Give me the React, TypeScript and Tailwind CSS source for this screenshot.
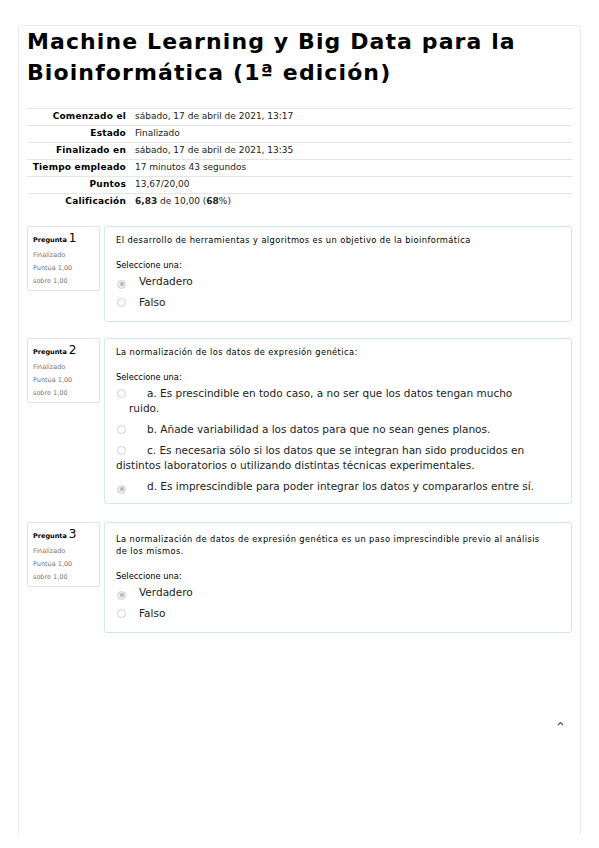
import React from 'react';

const summary: [string, React.ReactNode][] = [
    ['Comenzado el', 'sábado, 17 de abril de 2021, 13:17'],
    ['Estado', 'Finalizado'],
    ['Finalizado en', 'sábado, 17 de abril de 2021, 13:35'],
    ['Tiempo empleado', '17 minutos 43 segundos'],
    ['Puntos', '13,67/20,00'],
    [
        'Calificación',
        <>
            <b>6,83</b> de 10,00 (<b>68</b>%)
        </>,
    ],
];

function Radio({ checked }: { checked?: boolean }) {
    return (
        <span
            className={`inline-flex w-[9px] h-[9px] rounded-full border items-center justify-center align-[-1px] ${
                checked ? 'border-[#d4d4d4] bg-[#ececec]' : 'border-[#cfcfcf] bg-white'
            }`}
        >
            {checked && <span className="w-[4px] h-[4px] rounded-full bg-[#b8b8b8]" />}
        </span>
    );
}

function Info({ n }: { n: number }) {
    return (
        <div className="w-[73px] h-[65px] shrink-0 border border-[#e3e3e3] rounded-[2px] pl-[5px] pt-[4px] text-[6.5px] text-[#777]">
            <div className="text-black leading-[14px]">
                <span className="font-bold">Pregunta</span> <span className="text-[12px]">{n}</span>
            </div>
            <div className="leading-[10px] mt-[3px]">Finalizado</div>
            <div className="leading-[13px] mt-[2px]">
                Puntúa 1,00
                <br />
                sobre 1,00
            </div>
        </div>
    );
}

function Option({ checked, gap, children }: { checked?: boolean; gap: string; children: React.ReactNode }) {
    return (
        <div className="text-[10.5px] leading-[15px] text-[#222] mt-[6px] first:mt-[3px]">
            <span className="ml-[1px]">
                <Radio checked={checked} />
            </span>
            <span className={gap}>{children}</span>
        </div>
    );
}

function Question({
    n,
    className,
    pt,
    text,
    children,
}: {
    n: number;
    className: string;
    pt: string;
    text: React.ReactNode;
    children: React.ReactNode;
}) {
    return (
        <div className={`flex gap-[4px] items-start ${className}`}>
            <Info n={n} />
            <div className={`flex-1 border border-[#cde8f2] rounded-[3px] pl-[11px] pr-[10px] ${pt}`}>
                <div className="text-[8.3px] leading-[12px] tracking-[0.4px] text-black">{text}</div>
                <div className="text-[8.3px] leading-[12px] text-black mt-[13px]">Seleccione una:</div>
                <div>{children}</div>
            </div>
        </div>
    );
}

export default function App() {
    return (
        <div className="min-h-[848px] bg-white pt-[25px] px-[18px] font-['DejaVu_Sans',sans-serif]">
            <div className="h-[810px] border-t border-x border-[#ebebeb] rounded-t-[4px] px-[8px]">
                <h1 className="text-[22px] leading-[31px] font-bold tracking-[1.1px] text-black">
                    Machine Learning y Big Data para la
                    <br />
                    Bioinformática (1ª edición)
                </h1>

                <div className="mt-[20px]">
                    {summary.map(([label, value]) => (
                        <div key={label} className="flex h-[17px] items-center border-t border-[#e6e6e6] text-[9px] text-[#222]">
                            <div className="w-[99px] text-right font-bold text-black tracking-[0.2px]">{label}</div>
                            <div className="pl-[9px]">{value}</div>
                        </div>
                    ))}
                </div>

                <Question
                    n={1}
                    className="mt-[16px]"
                    pt="pt-[7px] pb-[11px]"
                    text="El desarrollo de herramientas y algoritmos es un objetivo de la bioinformática"
                >
                    <Option checked gap="ml-[13px]">Verdadero</Option>
                    <Option gap="ml-[13px]">Falso</Option>
                </Question>

                <Question
                    n={2}
                    className="mt-[16px]"
                    pt="pt-[7px] pb-[9px]"
                    text="La normalización de los datos de expresión genética:"
                >
                    <Option gap="ml-[21px]">
                        a. Es prescindible en todo caso, a no ser que los datos tengan mucho
                        <br />
                        <span className="ml-[13px]">ruido.</span>
                    </Option>
                    <Option gap="ml-[21px]">b. Añade variabilidad a los datos para que no sean genes planos.</Option>
                    <Option gap="ml-[21px]">
                        c. Es necesaria sólo si los datos que se integran han sido producidos en
                        <br />
                        distintos laboratorios o utilizando distintas técnicas experimentales.
                    </Option>
                    <Option checked gap="ml-[21px]">
                        d. Es imprescindible para poder integrar los datos y compararlos entre sí.
                    </Option>
                </Question>

                <Question
                    n={3}
                    className="mt-[18px]"
                    pt="pt-[10px] pb-[11px]"
                    text={
                        <>
                            La normalización de datos de expresión genética es un paso imprescindible previo al análisis
                            <br />
                            de los mismos.
                        </>
                    }
                >
                    <Option checked gap="ml-[13px]">Verdadero</Option>
                    <Option gap="ml-[13px]">Falso</Option>
                </Question>

                <div className="flex justify-end pr-[8px] mt-[88px]">
                    <svg width="7" height="5" viewBox="0 0 7 5" fill="none" stroke="#555" strokeWidth="1.2">
                        <path d="M1 4 L3.5 1.5 L6 4" />
                    </svg>
                </div>
            </div>
        </div>
    );
}
